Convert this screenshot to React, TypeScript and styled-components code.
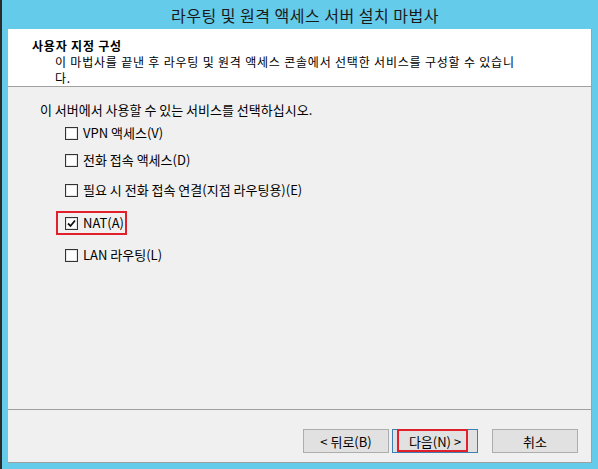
import React from 'react';
import styled, { createGlobalStyle } from 'styled-components';

const GlobalStyle = createGlobalStyle`
  html, body {
    margin: 0;
    padding: 0;
    width: 598px;
    height: 469px;
    overflow: hidden;
  }
  body {
    font-family: 'Noto Sans CJK KR', 'Noto Sans', sans-serif;
    color: #000;
  }
`;

const accent = '#65cbea';
const rule = '#a0a0a0';

const Screen = styled.div`
  display: flex;
  width: 598px;
  height: 469px;
`;

const DesktopEdge = styled.div`
  width: 2px;
  background: #2b2b2b;
`;

const Frame = styled.div`
  flex: 1;
  display: flex;
  flex-direction: column;
  background: ${accent};
  padding: 0 6px 6px 6px;
`;

const TitleBar = styled.div`
  height: 29px;
  display: flex;
  align-items: center;
  justify-content: center;
  font-size: 16px;
  letter-spacing: 0.5px;
  color: #1a1a1a;
  padding-left: 10px;
`;

const Client = styled.div`
  flex: 1;
  display: flex;
  flex-direction: column;
  border-right: 1px solid ${rule};
  border-bottom: 1px solid ${rule};
  background: #f0f0f0;
`;

const Header = styled.div`
  height: 58px;
  box-sizing: border-box;
  background: #fff;
  border-bottom: 1px solid ${rule};
  padding: 9px 0 0 24px;
  font-size: 12px;
  letter-spacing: 0.8px;
  line-height: 16px;
`;

const HeaderTitle = styled.div`
  font-weight: bold;
`;

const HeaderText = styled.div`
  padding-left: 23px;
`;

const Body = styled.div`
  flex: 1;
  border-bottom: 1px solid ${rule};
  padding: 15px 0 0 32px;
  font-size: 13px;
  line-height: 16px;
`;

const Options = styled.div`
  display: flex;
  flex-direction: column;
  padding-left: 25px;
`;

const OptionRow = styled.label<{ $top: number }>`
  position: relative;
  display: flex;
  align-items: center;
  gap: 5px;
  height: 16px;
  margin-top: ${(p) => p.$top}px;
`;

const Box = styled.span`
  width: 13px;
  height: 13px;
  box-sizing: border-box;
  border: 1px solid #333;
  background: #fff;
  box-shadow: inset 0 0 0 1px #e6e6e6;
  display: flex;
  align-items: center;
  justify-content: center;
`;

const Highlight = styled.span<{ $left: number; $top: number; $w: number; $h: number }>`
  position: absolute;
  left: ${(p) => p.$left}px;
  top: ${(p) => p.$top}px;
  width: ${(p) => p.$w}px;
  height: ${(p) => p.$h}px;
  box-sizing: border-box;
  border: 2px solid #e2202c;
  pointer-events: none;
`;

const Footer = styled.div`
  height: 52px;
  display: flex;
  justify-content: flex-end;
  align-items: flex-start;
  padding: 19px 13px 0 0;
  box-sizing: border-box;
`;

const Button = styled.button<{ $gap?: number; $default?: boolean }>`
  position: relative;
  width: 86px;
  height: 24px;
  margin-left: ${(p) => p.$gap ?? 0}px;
  border: 1px solid ${(p) => (p.$default ? '#3c7fb1' : '#adadad')};
  background: #e1e1e1;
  font-family: inherit;
  font-size: 13px;
  color: #000;
  padding: 0;
  display: flex;
  align-items: center;
  justify-content: center;
`;

const Check = () => (
  <svg width="9" height="9" viewBox="0 0 9 9">
    <path d="M1 4.5 L3.5 7 L8 1.5" fill="none" stroke="#111" strokeWidth="1.8" />
  </svg>
);

const services = [
  { label: 'VPN 액세스(V)', top: 7, checked: false },
  { label: '전화 접속 액세스(D)', top: 11, checked: false },
  { label: '필요 시 전화 접속 연결(지점 라우팅용)(E)', top: 14, checked: false },
  { label: 'NAT(A)', top: 17, checked: true },
  { label: 'LAN 라우팅(L)', top: 16, checked: false },
];

const App: React.FC = () => (
  <>
    <GlobalStyle />
    <Screen>
      <DesktopEdge />
      <Frame>
        <TitleBar>라우팅 및 원격 액세스 서버 설치 마법사</TitleBar>
        <Client>
          <Header>
            <HeaderTitle>사용자 지정 구성</HeaderTitle>
            <HeaderText>
              이 마법사를 끝낸 후 라우팅 및 원격 액세스 콘솔에서 선택한 서비스를 구성할 수 있습니
              <br />
              다.
            </HeaderText>
          </Header>
          <Body>
            <div>이 서버에서 사용할 수 있는 서비스를 선택하십시오.</div>
            <Options>
              {services.map((s) => (
                <OptionRow key={s.label} $top={s.top}>
                  <Box>{s.checked && <Check />}</Box>
                  <span>{s.label}</span>
                  {s.checked && <Highlight $left={-9} $top={-4} $w={71} $h={24} />}
                </OptionRow>
              ))}
            </Options>
          </Body>
          <Footer>
            <Button>&lt; 뒤로(B)</Button>
            <Button $gap={3} $default>
              다음(N) &gt;
              <Highlight $left={4} $top={-1} $w={71} $h={23} />
            </Button>
            <Button $gap={14}>취소</Button>
          </Footer>
        </Client>
      </Frame>
    </Screen>
  </>
);

export default App;
